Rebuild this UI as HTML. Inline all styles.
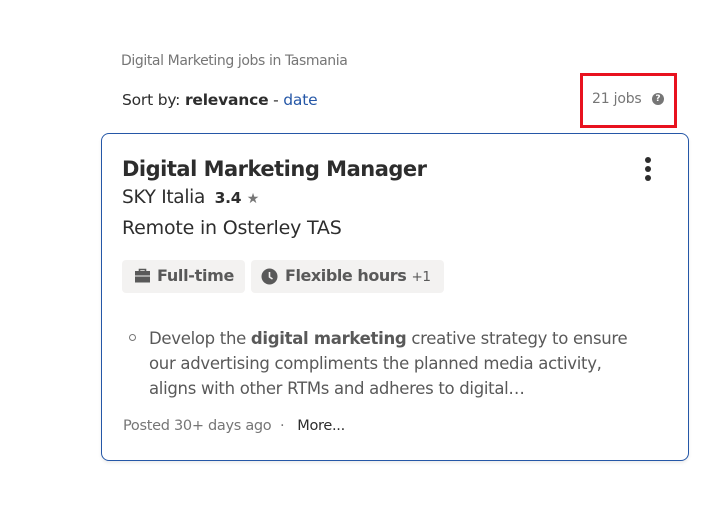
<!DOCTYPE html>
<html><head><meta charset="utf-8"><style>
*{margin:0;padding:0;box-sizing:border-box}
body{width:719px;height:521px;background:#fff;font-family:"DejaVu Sans","Liberation Sans",sans-serif;position:relative;overflow:hidden;color:#2d2d2d}
.a{position:absolute;white-space:nowrap}
</style></head><body>
<div class="a" style="left:121px;top:53px;font-size:14px;color:#767676;letter-spacing:-0.4px">Digital Marketing jobs in Tasmania</div>
<div class="a" style="left:122px;top:91px;font-size:15.5px;letter-spacing:-0.2px">Sort by: <b>relevance</b> - <span style="color:#2557a7">date</span></div>
<div class="a" style="left:580px;top:73px;width:97px;height:55px;border:3px solid #e8121f"></div>
<div class="a" style="left:592px;top:91px;font-size:14px;color:#767676;letter-spacing:-0.2px">21 jobs</div>
<div class="a" style="left:652px;top:93px;width:12px;height:12px;border-radius:50%;background:#767676;color:#fff;font-size:9px;font-weight:bold;text-align:center;line-height:12px">?</div>
<div class="a" style="left:101px;top:133px;width:588px;height:328px;border:1px solid #2557a7;border-radius:8px;box-shadow:0 2px 3px rgba(0,0,0,.08)"></div>
<div class="a" style="left:122px;top:157px;font-size:21px;font-weight:bold;letter-spacing:-0.5px">Digital Marketing Manager</div>
<div class="a" style="left:645px;top:157px;width:6px;height:6px;border-radius:50%;background:#2d2d2d"></div>
<div class="a" style="left:645px;top:166px;width:6px;height:6px;border-radius:50%;background:#2d2d2d"></div>
<div class="a" style="left:645px;top:175px;width:6px;height:6px;border-radius:50%;background:#2d2d2d"></div>
<div class="a" style="left:122px;top:187px;font-size:18.5px;letter-spacing:-0.3px">SKY Italia <b style="font-size:15.5px;margin-left:4px">3.4</b> <span style="color:#767676;font-size:14px">★</span></div>
<div class="a" style="left:122px;top:217px;font-size:19px;letter-spacing:-0.2px">Remote in Osterley TAS</div>
<div class="a" style="left:122px;top:260px;width:123px;height:33px;background:#f3f2f1;border-radius:4px"></div>
<svg class="a" style="left:134px;top:268px" width="17" height="16" viewBox="0 0 17 16"><path d="M5.5 3V1.5h6V3" fill="none" stroke="#595959" stroke-width="1.6"/><rect x="1" y="3" width="15" height="4.5" fill="#595959"/><rect x="1" y="8.5" width="15" height="6" fill="#595959"/></svg>
<div class="a" style="left:157px;top:266px;font-size:16px;font-weight:bold;color:#595959;letter-spacing:-0.3px">Full-time</div>
<div class="a" style="left:251px;top:260px;width:193px;height:33px;background:#f3f2f1;border-radius:4px"></div>
<svg class="a" style="left:261px;top:268px" width="17" height="17" viewBox="0 0 17 17"><circle cx="8.5" cy="8.5" r="8" fill="#595959"/><path d="M8.5 4v5l3 2" fill="none" stroke="#f3f2f1" stroke-width="1.6"/></svg>
<div class="a" style="left:285px;top:266px;font-size:16px;font-weight:bold;color:#595959;letter-spacing:-0.45px">Flexible hours <span style="font-weight:normal;font-size:13.5px">+1</span></div>
<div class="a" style="left:129px;top:334px;width:7px;height:7px;border:1px solid #767676;border-radius:50%"></div>
<div class="a" style="left:149px;top:326px;font-size:16.5px;line-height:25px;color:#595959;letter-spacing:-0.3px">Develop the <b>digital marketing</b> creative strategy to ensure<br>our advertising compliments the planned media activity,<br>aligns with other RTMs and adheres to digital…</div>
<div class="a" style="left:123px;top:418px;font-size:14.5px;color:#767676;letter-spacing:-0.3px">Posted 30+ days ago &nbsp;· &nbsp;&nbsp;<span style="color:#2d2d2d">More...</span></div>
</body></html>
